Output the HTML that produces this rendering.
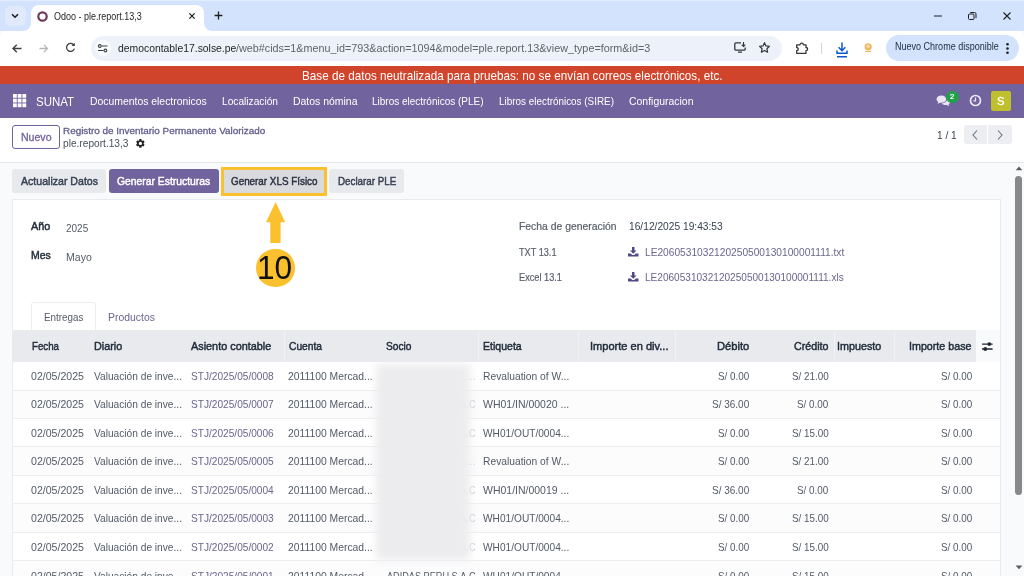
<!DOCTYPE html>
<html lang="es"><head><meta charset="utf-8"><title>Odoo - ple.report.13,3</title>
<style>
*{box-sizing:border-box;margin:0;padding:0}
html,body{width:1024px;height:576px;overflow:hidden;background:#f9fafb;font-family:"Liberation Sans",sans-serif;font-size:11.2px;color:#374151}
.a{position:absolute}
.t{position:absolute;white-space:nowrap;line-height:16px;height:16px;transform-origin:0 50%}
svg{position:absolute;overflow:visible}
#tabstrip{left:0;top:0;width:1024px;height:31px;background:#d3e3fd;border-top:1px solid #e2ecfd}
#chev{left:4.5px;top:6px;width:21px;height:20px;border-radius:6px;background:#e0eafc}
#tab{left:30.5px;top:5px;width:173.5px;height:27px;background:#fff;border-radius:8px 8px 0 0}
#toolbar{left:0;top:30.5px;width:1024px;height:35.5px;background:#fff;border-radius:7px 7px 0 0}
#url{left:90.5px;top:35.5px;width:691px;height:25.5px;border-radius:13px;background:#edf2fa}
#sitei{left:94.5px;top:40px;width:16px;height:16px;border-radius:50%;background:#f9fbfe}
#u2{color:#5f6368}
#upd{left:885.5px;top:35px;width:133.5px;height:25.5px;border-radius:13px;background:#d3e3fd}
#banner{left:0;top:65.5px;width:1024px;height:19px;background:#d0442c}
#nav{left:0;top:84.25px;width:1024px;height:33.5px;background:#71639e}
#avatar{left:991px;top:91.3px;width:19.5px;height:19.3px;border-radius:2px;background:#c0bf2e}
#badge{left:946.3px;top:90.6px;width:12.4px;height:12.4px;border-radius:50%;background:#21a04a}
#cp{left:0;top:117.75px;width:1024px;height:45px;background:#fff;border-bottom:1px solid #e4e7ea}
#bnew{left:12px;top:124.5px;width:48px;height:24.5px;border:1px solid #71639e;border-radius:3px;background:#fff}
.pg{top:124.5px;height:19px;background:#eceef1}
#pg1{left:963.5px;width:23px;border-radius:3px 0 0 3px}
#pg2{left:988px;width:23.5px;border-radius:0 3px 3px 0}
.btn{top:169px;height:24px;border-radius:3px;background:#e7e9ed}
#b1{left:12px;width:93.5px}
#b2{left:109px;width:110px;background:#71639e}
#b3{left:221px;top:167px;width:106px;height:29px;border-radius:0;background:#d8dadd;border:3px solid #fac02e}
#b4{left:329.25px;width:74.5px}
#sheet{left:11.5px;top:199px;width:989px;height:400px;background:#fff;border:1px solid #e9ebee}
#tabE{left:30.75px;top:302px;width:65px;height:29px;background:#fff;border:1px solid #eceef1;border-bottom:none;border-radius:3px 3px 0 0}
#thead{left:12.5px;top:330.4px;width:963.5px;height:31.2px;background:#e8eaee}
#thopt{left:976px;top:330.4px;width:24px;height:31.2px;background:#f9fafb}
.sep{top:331px;width:1px;height:30px;background:#f0f2f4}
.rl{left:12.5px;width:987.5px;height:1px;background:#eceef1}
.stripe{left:12.5px;width:987.5px;height:27.5px;background:#fcfcfd}
#blur{left:375.5px;top:364px;width:94.5px;height:196px;background:#ececee;filter:blur(4px)}
#thumb{left:1015px;top:176px;width:7px;height:318.5px;border-radius:3.5px;background:#888}
#circ{left:256.2px;top:249px;width:38.6px;height:38.4px;border-radius:50%;background:#fbc02d}
</style></head><body>
<div class="a" id="tabstrip"></div>
<div class="a" id="chev"></div>
<div class="a" id="tab"></div>
<svg style="left:22.5px;top:23px" width="8" height="8"><path d="M8 0v8H0a8 8 0 0 0 8-8z" fill="#fff"/></svg>
<svg style="left:204px;top:23px" width="8" height="8"><path d="M0 0v8h8a8 8 0 0 1-8-8z" fill="#fff"/></svg>
<div class="a" id="toolbar"></div>
<div class="a" id="url"></div>
<div class="a" id="sitei"></div>
<div class="a" id="upd"></div>
<!-- tab strip icons -->
<svg style="left:11px;top:13px" width="8" height="6"><path d="M1 1.2l3 3 3-3" fill="none" stroke="#1f1f1f" stroke-width="1.6"/></svg>
<svg style="left:36.5px;top:10.5px" width="11" height="11"><circle cx="5.5" cy="5.5" r="4.2" fill="none" stroke="#6d3a5c" stroke-width="2.2"/></svg>
<svg style="left:189.100px;top:13.200px" width="6" height="6"><path d="M0.400 0.400l5.200 5.200M5.600 0.400l-5.200 5.200" stroke="#1f1f1f" stroke-width="1.300"/></svg>
<svg style="left:214.400px;top:11.400px" width="9" height="9"><path d="M4.500 0.600v7.800M0.600 4.500h7.800" stroke="#1f1f1f" stroke-width="1.300"/></svg>
<svg style="left:934px;top:14.5px" width="8" height="2"><path d="M0 1h8" stroke="#1f1f1f" stroke-width="1"/></svg>
<svg style="left:968.300px;top:11.600px" width="9" height="9"><rect x="0.5" y="2" width="5.500" height="5.500" rx="1" fill="none" stroke="#1f1f1f"/><path d="M2.300 0.500h4.200a1.500 1.500 0 0 1 1.500 1.500v4.200" fill="none" stroke="#1f1f1f"/></svg>
<svg style="left:1003px;top:12px" width="8" height="8"><path d="M0.500 0.500l7 7M7.500 0.500l-7 7" stroke="#1f1f1f" stroke-width="1.1"/></svg>
<!-- toolbar icons -->
<svg style="left:12px;top:43.5px" width="10" height="9"><path d="M9.500 4.500H1M4.800 0.700L1 4.500l3.800 3.800" fill="none" stroke="#3c4043" stroke-width="1.4"/></svg>
<svg style="left:39px;top:43.500px" width="10" height="9"><path d="M0.500 4.500H8.500M4.900 0.900L8.500 4.500 4.900 8.100" fill="none" stroke="#b4b8bd" stroke-width="1.300"/></svg>
<svg style="left:65px;top:42.300px" width="11" height="11"><path d="M8.900 3.200A4 4 0 1 0 9.400 6.600" fill="none" stroke="#3c4043" stroke-width="1.300"/><path d="M9.800 0.800v3.300H6.500z" fill="#3c4043"/></svg>
<svg style="left:98px;top:43.700px" width="10" height="9"><path d="M3.600 2H9.500M0 6.500h5.400" stroke="#3c4043" stroke-width="1.100"/><circle cx="1.800" cy="2" r="1.400" fill="none" stroke="#3c4043" stroke-width="1.100"/><circle cx="7.400" cy="6.500" r="1.400" fill="none" stroke="#3c4043" stroke-width="1.100"/></svg>
<svg style="left:733.500px;top:42.300px" width="12" height="11"><path d="M7 0.800H1.800a1 1 0 0 0-1 1v5.400a1 1 0 0 0 1 1h8.400a1 1 0 0 0 1-1V5.500M4 10.200h4" fill="none" stroke="#33373b" stroke-width="1.300"/><path d="M9.500 0v4.200M7.700 2.600l1.800 1.800 1.800-1.800" fill="none" stroke="#33373b" stroke-width="1.100"/></svg>
<svg style="left:758.500px;top:42.300px" width="11" height="11" viewBox="0 0 12 12"><path d="M6 0.800l1.600 3.500 3.800 0.400-2.800 2.600 0.800 3.800L6 9.200l-3.400 1.900 0.800-3.800L0.600 4.700l3.800-0.400z" fill="none" stroke="#33373b" stroke-width="1.300" stroke-linejoin="round"/></svg>
<svg style="left:795.800px;top:41.700px" width="12" height="12"><path d="M0.700 2.800H4a1.700 1.700 0 0 1 3.400 0H10v2.700a1.600 1.600 0 0 1 0 3.200V11.300H0.700V8.700a1.600 1.600 0 0 0 0-3.200z" fill="none" stroke="#33373b" stroke-width="1.300" stroke-linejoin="round"/></svg>
<svg style="left:820.500px;top:43px" width="1" height="11"><path d="M0.500 0v11" stroke="#d3d7dc" stroke-width="1"/></svg>
<svg style="left:836px;top:41.500px" width="12" height="16"><path d="M6 0.500v8M2.600 5.300L6 8.700l3.400-3.400M1 8.500v2.700h10V8.500M1 14.800h10" fill="none" stroke="#0b57d0" stroke-width="1.500"/></svg>
<svg style="left:864.300px;top:43px" width="9" height="10"><circle cx="4.200" cy="3.800" r="3.600" fill="#f2b55f"/><circle cx="4.200" cy="3.200" r="1.700" fill="#f9dcae"/><path d="M1 8h6.400v1H1z" fill="#e8b872"/></svg>
<svg style="left:1005.500px;top:42.500px" width="3" height="11"><circle cx="1.500" cy="1.300" r="1.300" fill="#1f1f1f"/><circle cx="1.500" cy="5.500" r="1.300" fill="#1f1f1f"/><circle cx="1.500" cy="9.700" r="1.300" fill="#1f1f1f"/></svg>
<!-- banner + navbar -->
<div class="a" id="banner"></div>
<div class="a" id="nav"></div>
<svg style="left:13.250px;top:94.250px" width="14" height="14"><g fill="#fff"><rect x="0" y="0" width="3.800" height="3.800"/><rect x="4.700" y="0" width="3.800" height="3.800"/><rect x="9.400" y="0" width="3.800" height="3.800"/><rect x="0" y="4.700" width="3.800" height="3.800"/><rect x="4.700" y="4.700" width="3.800" height="3.800"/><rect x="9.400" y="4.700" width="3.800" height="3.800"/><rect x="0" y="9.400" width="3.800" height="3.800"/><rect x="4.700" y="9.400" width="3.800" height="3.800"/><rect x="9.400" y="9.400" width="3.800" height="3.800"/></g></svg>
<svg style="left:936.2px;top:95.300px" width="15" height="11.800" viewBox="0 0 14 11"><path d="M5 0.500C2.500 0.500 0.500 2 0.500 3.900c0 1.100 0.700 2 1.700 2.600L1.500 8.300l2.300-1.100c0.400 0.100 0.800 0.100 1.200 0.100 2.500 0 4.500-1.500 4.500-3.400S7.500 0.500 5 0.500z" fill="#e9e6f2"/><path d="M10.500 3.600c0 2.400-2.300 4.300-5.200 4.400 0.800 0.900 2.100 1.400 3.600 1.400 0.400 0 0.800 0 1.200-0.100l2.300 1.100-0.700-1.800c1-0.600 1.700-1.500 1.700-2.600 0-1.200-1.200-2.200-2.900-2.400z" fill="#e9e6f2"/></svg>
<div class="a" id="badge"></div>
<svg style="left:968.500px;top:94px" width="13" height="13"><circle cx="6.500" cy="6.500" r="5" fill="none" stroke="#ece8f5" stroke-width="1.700"/><path d="M6.500 3.500v3.300H4.400" fill="none" stroke="#ece8f5" stroke-width="1.200"/></svg>
<div class="a" id="avatar"></div>
<!-- control panel -->
<div class="a" id="cp"></div>
<div class="a" id="bnew"></div>
<svg style="left:135.2px;top:138.4px" width="10.8" height="10.8" viewBox="0 0 24 24"><path d="M19.140 12.940c.040-.300.060-.610.060-.940s-.020-.640-.070-.940l2.030-1.580a.49.490 0 0 0 .12-.61l-1.920-3.320a.488.488 0 0 0-.59-.22l-2.390.96c-.5-.38-1.030-.7-1.620-.94l-.36-2.540a.484.484 0 0 0-.48-.41h-3.840c-.24 0-.43.170-.47.410l-.36 2.540c-.59.240-1.130.57-1.620.94l-2.390-.96c-.22-.08-.47 0-.59.220L2.740 8.870c-.12.210-.8.470.12.610l2.030 1.580c-.5.300-.9.630-.9.940s.2.640.7.940l-2.030 1.580a.49.490 0 0 0-.12.610l1.920 3.320c.12.220.37.290.59.220l2.390-.96c.5.380 1.030.7 1.620.94l.36 2.540c.5.240.24.410.48.410h3.840c.24 0 .44-.17.470-.41l.36-2.540c.59-.24 1.130-.56 1.620-.94l2.390.96c.22.080.47 0 .59-.22l1.920-3.320c.12-.22.070-.47-.12-.61l-2.010-1.580zM12 15.600A3.600 3.600 0 1 1 12 8.400a3.600 3.600 0 0 1 0 7.200z" fill="#212529"/></svg>
<div class="a pg" id="pg1"></div><div class="a pg" id="pg2"></div>
<svg style="left:972px;top:129.500px" width="6" height="10"><path d="M5 0.500L1 5l4 4.500" fill="none" stroke="#6b7280" stroke-width="1.100"/></svg>
<svg style="left:997px;top:129.500px" width="6" height="10"><path d="M1 0.500L5 5 1 9.500" fill="none" stroke="#6b7280" stroke-width="1.100"/></svg>
<!-- status bar -->
<div class="a btn" id="b1"></div><div class="a btn" id="b2"></div><div class="a btn" id="b3"></div><div class="a btn" id="b4"></div>
<!-- sheet -->
<div class="a" id="sheet"></div>
<div class="a" id="tabE"></div>
<div class="a" id="thead"></div><div class="a" id="thopt"></div>
<div class="a sep" style="left:284px"></div><div class="a sep" style="left:478px"></div><div class="a sep" style="left:578px"></div><div class="a sep" style="left:674.500px"></div><div class="a sep" style="left:834px"></div><div class="a sep" style="left:894px"></div>
<svg style="left:982px;top:342.200px" width="11" height="9"><path d="M0 2.100h10.600M0 7h10.600" stroke="#1f2937" stroke-width="1.300"/><circle cx="7.300" cy="2.100" r="1.900" fill="#1f2937"/><circle cx="3.300" cy="7" r="1.900" fill="#1f2937"/></svg>
<div class="a stripe" style="top:390.50px"></div><div class="a stripe" style="top:447.40px"></div><div class="a stripe" style="top:504.30px"></div><div class="a stripe" style="top:561.20px"></div>
<div class="a rl" style="top:389.50px"></div><div class="a rl" style="top:417.95px"></div><div class="a rl" style="top:446.40px"></div><div class="a rl" style="top:474.85px"></div><div class="a rl" style="top:503.30px"></div><div class="a rl" style="top:531.75px"></div><div class="a rl" style="top:560.20px"></div>
<!-- download icons -->
<svg style="left:628.250px;top:246.500px" width="10.500" height="9.500" viewBox="0 0 21 19"><path d="M8 0h5v7h4l-6.500 6.500L4 7h4z" fill="#4f4a86"/><path d="M0 13h5.500l3 3h4l3-3H21v6H0z" fill="#4f4a86"/></svg>
<svg style="left:628.250px;top:272px" width="10.500" height="9.500" viewBox="0 0 21 19"><path d="M8 0h5v7h4l-6.500 6.500L4 7h4z" fill="#4f4a86"/><path d="M0 13h5.500l3 3h4l3-3H21v6H0z" fill="#4f4a86"/></svg>
<!-- annotation -->
<svg style="left:266px;top:201.900px" width="19.500" height="42"><path d="M9.600 0L19.200 20.200H14.600V41H4.300V20.200H0z" fill="#fbc02d"/></svg>
<div class="a" id="circ"></div>
<!-- scrollbar -->
<svg style="left:1014.500px;top:166px" width="8" height="5"><path d="M4 0.600L7.400 4.300H0.600z" fill="#5c5c5c"/></svg>
<div class="a" id="thumb"></div>
<svg style="left:1014.500px;top:565px" width="8" height="5"><path d="M0.600 0.600h6.800L4 4.300z" fill="#5c5c5c"/></svg>

<div class="g" id="browser">
<span class="t" style="left:54.25px;top:8.50px;font-size:10.1px;color:#1f1f1f;transform:scaleX(0.8885)">Odoo - ple.report.13,3</span>
<span class="t" style="left:118.00px;top:40.00px;font-size:11.2px;color:#1f1f1f;transform:scaleX(0.9277)">democontable17.solse.pe</span>
<span class="t" style="left:236.30px;top:40.00px;font-size:11.2px;color:#5f6368;transform:scaleX(0.9652)">/web#cids=1&amp;menu_id=793&amp;action=1094&amp;model=ple.report.13&amp;view_type=form&amp;id=3</span>
<span class="t" style="left:894.60px;top:39.30px;font-size:10px;color:#1f2a3d;transform:scaleX(0.9020)">Nuevo Chrome disponible</span>
</div>
<div class="g" id="neutralize">
<span class="t" style="left:301.50px;top:67.60px;font-size:12.6px;color:#ffffff;transform:scaleX(0.9284)">Base de datos neutralizada para pruebas: no se envían correos electrónicos, etc.</span>
</div>
<nav class="g">
<span class="t" style="left:35.75px;top:93.50px;font-size:12.6px;color:#ffffff;transform:scaleX(0.9102)">SUNAT</span>
<span class="t" style="left:90.00px;top:93.25px;font-size:11.4px;color:#ffffff;transform:scaleX(0.9129)">Documentos electronicos</span>
<span class="t" style="left:221.50px;top:93.25px;font-size:11.4px;color:#ffffff;transform:scaleX(0.8933)">Localización</span>
<span class="t" style="left:292.50px;top:93.25px;font-size:11.4px;color:#ffffff;transform:scaleX(0.9177)">Datos nómina</span>
<span class="t" style="left:372.00px;top:93.25px;font-size:11.4px;color:#ffffff;transform:scaleX(0.8762)">Libros electrónicos (PLE)</span>
<span class="t" style="left:498.50px;top:93.25px;font-size:11.4px;color:#ffffff;transform:scaleX(0.8692)">Libros electrónicos (SIRE)</span>
<span class="t" style="left:628.50px;top:93.25px;font-size:11.4px;color:#ffffff;transform:scaleX(0.9175)">Configuracion</span>
<span class="t" style="left:996.75px;top:93.25px;font-size:11px;color:#ffffff;-webkit-text-stroke:0.3px #ffffff;transform:scaleX(1.0213)">S</span>
<span class="t" style="left:950.30px;top:88.60px;font-size:7.8px;color:#ffffff;-webkit-text-stroke:0.2px #ffffff;transform:scaleX(0.9899)">2</span>
</nav>
<div class="g" id="controlpanel">
<span class="t" style="left:20.75px;top:128.50px;font-size:11.2px;color:#71639e;-webkit-text-stroke:0.3px #71639e;transform:scaleX(0.9430)">Nuevo</span>
<span class="t" style="left:63.25px;top:123.40px;font-size:9.5px;color:#625d8e;-webkit-text-stroke:0.3px #625d8e;transform:scaleX(1.0417)">Registro de Inventario Permanente Valorizado</span>
<span class="t" style="left:63.25px;top:135.10px;font-size:10.6px;color:#495057;transform:scaleX(0.9586)">ple.report.13,3</span>
<span class="t" style="left:937.00px;top:127.00px;font-size:11.2px;color:#374151;transform:scaleX(0.9067)">1 / 1</span>
</div>
<div class="g" id="statusbar">
<span class="t" style="left:20.50px;top:173.25px;font-size:11.2px;color:#374151;-webkit-text-stroke:0.45px #374151;transform:scaleX(0.9451)">Actualizar Datos</span>
<span class="t" style="left:117.25px;top:173.25px;font-size:11.2px;color:#ffffff;-webkit-text-stroke:0.45px #ffffff;transform:scaleX(0.9257)">Generar Estructuras</span>
<span class="t" style="left:230.50px;top:173.25px;font-size:11.2px;color:#2b3040;-webkit-text-stroke:0.45px #2b3040;transform:scaleX(0.8804)">Generar XLS Físico</span>
<span class="t" style="left:337.50px;top:173.25px;font-size:11.2px;color:#374151;-webkit-text-stroke:0.45px #374151;transform:scaleX(0.8755)">Declarar PLE</span>
</div>
<main class="g">
<span class="t" style="left:30.75px;top:218.30px;font-size:10.8px;color:#1f2937;-webkit-text-stroke:0.45px #1f2937;transform:scaleX(1.0016)">Año</span>
<span class="t" style="left:65.75px;top:220.00px;font-size:11.2px;color:#535a66;transform:scaleX(0.8939)">2025</span>
<span class="t" style="left:31.00px;top:247.40px;font-size:10.8px;color:#1f2937;-webkit-text-stroke:0.45px #1f2937;transform:scaleX(0.9678)">Mes</span>
<span class="t" style="left:65.75px;top:249.00px;font-size:11.2px;color:#535a66;transform:scaleX(0.9412)">Mayo</span>
<span class="t" style="left:518.75px;top:218.90px;font-size:10.2px;color:#585e69;-webkit-text-stroke:0.2px #585e69;transform:scaleX(1.0186)">Fecha de generación</span>
<span class="t" style="left:629.25px;top:218.25px;font-size:11.2px;color:#374151;transform:scaleX(0.9132)">16/12/2025 19:43:53</span>
<span class="t" style="left:518.75px;top:245.00px;font-size:10.2px;color:#585e69;-webkit-text-stroke:0.2px #585e69;transform:scaleX(0.8989)">TXT 13.1</span>
<span class="t" style="left:644.50px;top:243.75px;font-size:11.2px;color:#6a668f;transform:scaleX(0.9100)">LE2060531032120250500130100001111.txt</span>
<span class="t" style="left:518.75px;top:269.90px;font-size:10.2px;color:#585e69;-webkit-text-stroke:0.2px #585e69;transform:scaleX(0.9038)">Excel 13.1</span>
<span class="t" style="left:644.50px;top:269.25px;font-size:11.2px;color:#6a668f;transform:scaleX(0.8997)">LE2060531032120250500130100001111.xls</span>
<span class="t" style="left:257.20px;top:259.50px;font-size:33.2px;color:#111111;transform:scaleX(0.9534)">10</span>
<span class="t" style="left:43.75px;top:309.00px;font-size:11.2px;color:#555b66;transform:scaleX(0.8821)">Entregas</span>
<span class="t" style="left:108.00px;top:309.00px;font-size:11.2px;color:#6a668f;transform:scaleX(0.9330)">Productos</span>
</main>
<section class="g" id="lines">
<span class="t" style="left:31.75px;top:337.50px;font-size:11.2px;color:#1f2937;-webkit-text-stroke:0.45px #1f2937;transform:scaleX(0.8683)">Fecha</span>
<span class="t" style="left:93.75px;top:337.50px;font-size:11.2px;color:#1f2937;-webkit-text-stroke:0.45px #1f2937;transform:scaleX(0.9663)">Diario</span>
<span class="t" style="left:190.75px;top:337.50px;font-size:11.2px;color:#1f2937;-webkit-text-stroke:0.45px #1f2937;transform:scaleX(0.9700)">Asiento contable</span>
<span class="t" style="left:288.50px;top:337.50px;font-size:11.2px;color:#1f2937;-webkit-text-stroke:0.45px #1f2937;transform:scaleX(0.9147)">Cuenta</span>
<span class="t" style="left:386.00px;top:337.50px;font-size:11.2px;color:#1f2937;-webkit-text-stroke:0.45px #1f2937;transform:scaleX(0.9107)">Socio</span>
<span class="t" style="left:483.25px;top:337.50px;font-size:11.2px;color:#1f2937;-webkit-text-stroke:0.45px #1f2937;transform:scaleX(0.9437)">Etiqueta</span>
<span class="t" style="left:589.50px;top:337.50px;font-size:11.2px;color:#1f2937;-webkit-text-stroke:0.45px #1f2937;transform:scaleX(0.9888)">Importe en div...</span>
<span class="t" style="left:717.00px;top:337.50px;font-size:11.2px;color:#1f2937;-webkit-text-stroke:0.45px #1f2937;transform:scaleX(0.9971)">Débito</span>
<span class="t" style="left:794.00px;top:337.50px;font-size:11.2px;color:#1f2937;-webkit-text-stroke:0.45px #1f2937;transform:scaleX(0.9563)">Crédito</span>
<span class="t" style="left:836.75px;top:337.50px;font-size:11.2px;color:#1f2937;-webkit-text-stroke:0.45px #1f2937;transform:scaleX(0.9613)">Impuesto</span>
<span class="t" style="left:909.00px;top:337.50px;font-size:11.2px;color:#1f2937;-webkit-text-stroke:0.45px #1f2937;transform:scaleX(0.9572)">Importe base</span>
<span class="t" style="left:31.25px;top:367.90px;font-size:11.2px;color:#535a66;transform:scaleX(0.9464)">02/05/2025</span>
<span class="t" style="left:93.50px;top:367.90px;font-size:11.2px;color:#535a66;transform:scaleX(0.9088)">Valuación de inve...</span>
<span class="t" style="left:190.75px;top:367.90px;font-size:11.2px;color:#6a668f;transform:scaleX(0.9050)">STJ/2025/05/0008</span>
<span class="t" style="left:288.00px;top:367.90px;font-size:11.2px;color:#535a66;transform:scaleX(0.9248)">2011100 Mercad...</span>
<span class="t" style="left:386.50px;top:367.90px;font-size:11.2px;color:#c9ccd1;transform:scaleX(0.8952)">ADIDAS PERU S....</span>
<span class="t" style="left:483.00px;top:367.90px;font-size:11.2px;color:#535a66;transform:scaleX(0.9185)">Revaluation of W...</span>
<span class="t" style="left:718.25px;top:367.90px;font-size:11.2px;color:#535a66;transform:scaleX(0.8814)">S/ 0.00</span>
<span class="t" style="left:791.75px;top:367.90px;font-size:11.2px;color:#535a66;transform:scaleX(0.8816)">S/ 21.00</span>
<span class="t" style="left:940.50px;top:367.90px;font-size:11.2px;color:#535a66;transform:scaleX(0.8814)">S/ 0.00</span>
<span class="t" style="left:31.25px;top:396.35px;font-size:11.2px;color:#535a66;transform:scaleX(0.9464)">02/05/2025</span>
<span class="t" style="left:93.50px;top:396.35px;font-size:11.2px;color:#535a66;transform:scaleX(0.9088)">Valuación de inve...</span>
<span class="t" style="left:190.75px;top:396.35px;font-size:11.2px;color:#6a668f;transform:scaleX(0.9050)">STJ/2025/05/0007</span>
<span class="t" style="left:288.00px;top:396.35px;font-size:11.2px;color:#535a66;transform:scaleX(0.9248)">2011100 Mercad...</span>
<span class="t" style="left:386.50px;top:396.35px;font-size:11.2px;color:#c9ccd1;transform:scaleX(0.8181)">ADIDAS PERU S.A.C</span>
<span class="t" style="left:483.00px;top:396.35px;font-size:11.2px;color:#535a66;transform:scaleX(0.9372)">WH01/IN/00020 ...</span>
<span class="t" style="left:712.25px;top:396.35px;font-size:11.2px;color:#535a66;transform:scaleX(0.8936)">S/ 36.00</span>
<span class="t" style="left:797.25px;top:396.35px;font-size:11.2px;color:#535a66;transform:scaleX(0.8814)">S/ 0.00</span>
<span class="t" style="left:940.50px;top:396.35px;font-size:11.2px;color:#535a66;transform:scaleX(0.8814)">S/ 0.00</span>
<span class="t" style="left:31.25px;top:424.80px;font-size:11.2px;color:#535a66;transform:scaleX(0.9464)">02/05/2025</span>
<span class="t" style="left:93.50px;top:424.80px;font-size:11.2px;color:#535a66;transform:scaleX(0.9088)">Valuación de inve...</span>
<span class="t" style="left:190.75px;top:424.80px;font-size:11.2px;color:#6a668f;transform:scaleX(0.9050)">STJ/2025/05/0006</span>
<span class="t" style="left:288.00px;top:424.80px;font-size:11.2px;color:#535a66;transform:scaleX(0.9248)">2011100 Mercad...</span>
<span class="t" style="left:386.50px;top:424.80px;font-size:11.2px;color:#c9ccd1;transform:scaleX(0.8181)">ADIDAS PERU S.A.C</span>
<span class="t" style="left:483.00px;top:424.80px;font-size:11.2px;color:#535a66;transform:scaleX(0.9066)">WH01/OUT/0004...</span>
<span class="t" style="left:718.25px;top:424.80px;font-size:11.2px;color:#535a66;transform:scaleX(0.8814)">S/ 0.00</span>
<span class="t" style="left:791.75px;top:424.80px;font-size:11.2px;color:#535a66;transform:scaleX(0.8816)">S/ 15.00</span>
<span class="t" style="left:940.50px;top:424.80px;font-size:11.2px;color:#535a66;transform:scaleX(0.8814)">S/ 0.00</span>
<span class="t" style="left:31.25px;top:453.25px;font-size:11.2px;color:#535a66;transform:scaleX(0.9464)">02/05/2025</span>
<span class="t" style="left:93.50px;top:453.25px;font-size:11.2px;color:#535a66;transform:scaleX(0.9088)">Valuación de inve...</span>
<span class="t" style="left:190.75px;top:453.25px;font-size:11.2px;color:#6a668f;transform:scaleX(0.9050)">STJ/2025/05/0005</span>
<span class="t" style="left:288.00px;top:453.25px;font-size:11.2px;color:#535a66;transform:scaleX(0.9248)">2011100 Mercad...</span>
<span class="t" style="left:386.50px;top:453.25px;font-size:11.2px;color:#c9ccd1;transform:scaleX(0.8952)">ADIDAS PERU S....</span>
<span class="t" style="left:483.00px;top:453.25px;font-size:11.2px;color:#535a66;transform:scaleX(0.9185)">Revaluation of W...</span>
<span class="t" style="left:718.25px;top:453.25px;font-size:11.2px;color:#535a66;transform:scaleX(0.8814)">S/ 0.00</span>
<span class="t" style="left:791.75px;top:453.25px;font-size:11.2px;color:#535a66;transform:scaleX(0.8816)">S/ 21.00</span>
<span class="t" style="left:940.50px;top:453.25px;font-size:11.2px;color:#535a66;transform:scaleX(0.8814)">S/ 0.00</span>
<span class="t" style="left:31.25px;top:481.70px;font-size:11.2px;color:#535a66;transform:scaleX(0.9464)">02/05/2025</span>
<span class="t" style="left:93.50px;top:481.70px;font-size:11.2px;color:#535a66;transform:scaleX(0.9088)">Valuación de inve...</span>
<span class="t" style="left:190.75px;top:481.70px;font-size:11.2px;color:#6a668f;transform:scaleX(0.9050)">STJ/2025/05/0004</span>
<span class="t" style="left:288.00px;top:481.70px;font-size:11.2px;color:#535a66;transform:scaleX(0.9248)">2011100 Mercad...</span>
<span class="t" style="left:386.50px;top:481.70px;font-size:11.2px;color:#c9ccd1;transform:scaleX(0.8181)">ADIDAS PERU S.A.C</span>
<span class="t" style="left:483.00px;top:481.70px;font-size:11.2px;color:#535a66;transform:scaleX(0.9372)">WH01/IN/00019 ...</span>
<span class="t" style="left:712.25px;top:481.70px;font-size:11.2px;color:#535a66;transform:scaleX(0.8936)">S/ 36.00</span>
<span class="t" style="left:797.25px;top:481.70px;font-size:11.2px;color:#535a66;transform:scaleX(0.8814)">S/ 0.00</span>
<span class="t" style="left:940.50px;top:481.70px;font-size:11.2px;color:#535a66;transform:scaleX(0.8814)">S/ 0.00</span>
<span class="t" style="left:31.25px;top:510.15px;font-size:11.2px;color:#535a66;transform:scaleX(0.9464)">02/05/2025</span>
<span class="t" style="left:93.50px;top:510.15px;font-size:11.2px;color:#535a66;transform:scaleX(0.9088)">Valuación de inve...</span>
<span class="t" style="left:190.75px;top:510.15px;font-size:11.2px;color:#6a668f;transform:scaleX(0.9050)">STJ/2025/05/0003</span>
<span class="t" style="left:288.00px;top:510.15px;font-size:11.2px;color:#535a66;transform:scaleX(0.9248)">2011100 Mercad...</span>
<span class="t" style="left:386.50px;top:510.15px;font-size:11.2px;color:#c9ccd1;transform:scaleX(0.8181)">ADIDAS PERU S.A.C</span>
<span class="t" style="left:483.00px;top:510.15px;font-size:11.2px;color:#535a66;transform:scaleX(0.9066)">WH01/OUT/0004...</span>
<span class="t" style="left:718.25px;top:510.15px;font-size:11.2px;color:#535a66;transform:scaleX(0.8814)">S/ 0.00</span>
<span class="t" style="left:791.75px;top:510.15px;font-size:11.2px;color:#535a66;transform:scaleX(0.8816)">S/ 15.00</span>
<span class="t" style="left:940.50px;top:510.15px;font-size:11.2px;color:#535a66;transform:scaleX(0.8814)">S/ 0.00</span>
<span class="t" style="left:31.25px;top:538.60px;font-size:11.2px;color:#535a66;transform:scaleX(0.9464)">02/05/2025</span>
<span class="t" style="left:93.50px;top:538.60px;font-size:11.2px;color:#535a66;transform:scaleX(0.9088)">Valuación de inve...</span>
<span class="t" style="left:190.75px;top:538.60px;font-size:11.2px;color:#6a668f;transform:scaleX(0.9050)">STJ/2025/05/0002</span>
<span class="t" style="left:288.00px;top:538.60px;font-size:11.2px;color:#535a66;transform:scaleX(0.9248)">2011100 Mercad...</span>
<span class="t" style="left:386.50px;top:538.60px;font-size:11.2px;color:#c9ccd1;transform:scaleX(0.8181)">ADIDAS PERU S.A.C</span>
<span class="t" style="left:483.00px;top:538.60px;font-size:11.2px;color:#535a66;transform:scaleX(0.9066)">WH01/OUT/0004...</span>
<span class="t" style="left:718.25px;top:538.60px;font-size:11.2px;color:#535a66;transform:scaleX(0.8814)">S/ 0.00</span>
<span class="t" style="left:791.75px;top:538.60px;font-size:11.2px;color:#535a66;transform:scaleX(0.8816)">S/ 15.00</span>
<span class="t" style="left:940.50px;top:538.60px;font-size:11.2px;color:#535a66;transform:scaleX(0.8814)">S/ 0.00</span>
<span class="t" style="left:31.25px;top:567.65px;font-size:11.2px;color:#535a66;transform:scaleX(0.9464)">02/05/2025</span>
<span class="t" style="left:93.50px;top:567.65px;font-size:11.2px;color:#535a66;transform:scaleX(0.9088)">Valuación de inve...</span>
<span class="t" style="left:190.75px;top:567.65px;font-size:11.2px;color:#6a668f;transform:scaleX(0.9050)">STJ/2025/05/0001</span>
<span class="t" style="left:288.00px;top:567.65px;font-size:11.2px;color:#535a66;transform:scaleX(0.9248)">2011100 Mercad...</span>
<span class="t" style="left:386.50px;top:567.65px;font-size:11.2px;color:#535a66;transform:scaleX(0.8181)">ADIDAS PERU S.A.C</span>
<span class="t" style="left:483.00px;top:567.65px;font-size:11.2px;color:#535a66;transform:scaleX(0.9066)">WH01/OUT/0004...</span>
<span class="t" style="left:718.25px;top:567.65px;font-size:11.2px;color:#535a66;transform:scaleX(0.8814)">S/ 0.00</span>
<span class="t" style="left:791.75px;top:567.65px;font-size:11.2px;color:#535a66;transform:scaleX(0.8816)">S/ 15.00</span>
<span class="t" style="left:940.50px;top:567.65px;font-size:11.2px;color:#535a66;transform:scaleX(0.8814)">S/ 0.00</span>
</section>
<div class="a" id="blur"></div>

</body></html>
